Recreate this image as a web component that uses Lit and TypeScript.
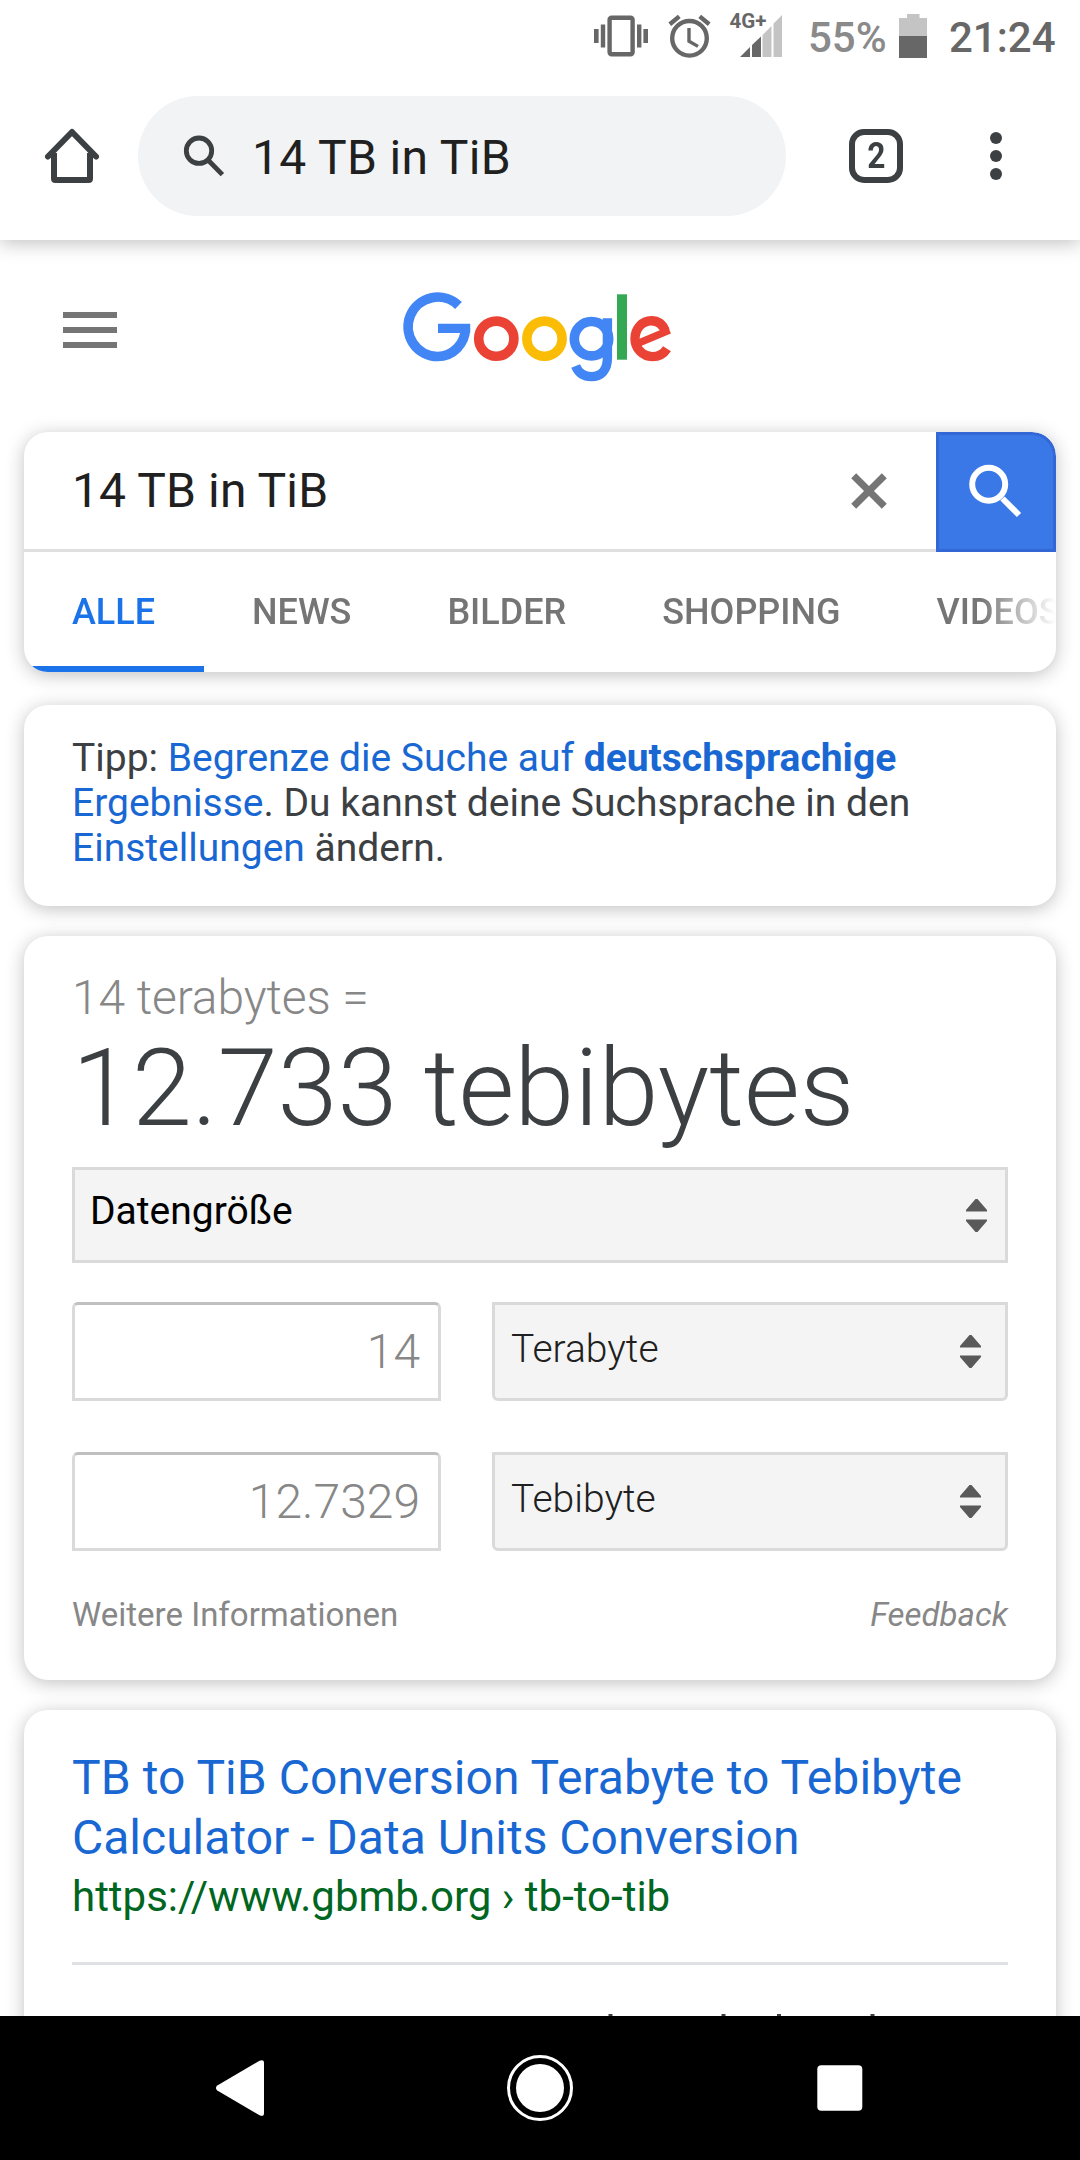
import { LitElement, html, css, svg } from "lit";
import { customElement, property } from "lit/decorators.js";

const FONT = css`Roboto, "Liberation Sans", sans-serif`;

/** Status bar, 72px high. Icon view boxes share the screen's coordinates. */
@customElement("status-bar")
class StatusBar extends LitElement {
  static styles = css`
    :host { display: flex; position: relative; z-index: 3; background: #fff; height: 72px; padding-left: 594px; font: 500 42px/69px ${FONT}; color: #676767; flex: none; white-space: nowrap; }
    svg { display: block; flex: none; }
    .alarm { margin-left: 20px; }
    .signal { margin-left: 16px; }
    .net { font: 700 20px ${FONT}; fill: #676767; }
    .pct { width: 91px; margin-left: 24px; padding-top: 3px; color: #8a8a8a; }
    .time { margin-left: 22px; padding-top: 3px; }
  `;
  render() {
    return html`
      <svg width="54" height="72" viewBox="594 0 54 72" fill="#676767">
        <rect x="609.6" y="17.8" width="23" height="36.4" rx="2" fill="none" stroke="#676767" stroke-width="4.4" />
        <rect x="594" y="29" width="4.6" height="14" /><rect x="600.8" y="24.5" width="4.4" height="23" />
        <rect x="637" y="24.5" width="4.4" height="23" /><rect x="643.4" y="29" width="4.6" height="14" />
      </svg>
      <svg class="alarm" width="44" height="72" viewBox="668 0 44 72" fill="none" stroke="#676767" stroke-width="4.4">
        <circle cx="689.5" cy="38.3" r="17.3" />
        <path d="M689 28v13.2l9 5.2" stroke-width="3.4" />
        <path d="M669.8 24.2L679.3 16.4M699.7 16.4L709.2 24.2" />
      </svg>
      <svg class="signal" width="56" height="72" viewBox="728 0 56 72">
        <text class="net" x="729.5" y="27.8" textLength="37" lengthAdjust="spacingAndGlyphs">4G+</text>
        <path fill="#676767" d="M740 57L750 47V57ZM752 45L761 36.500V57H752Z" />
        <path fill="#c4c4c4" d="M762.500 35L771.500 26V57H762.500ZM773.500 23.500L782 15V57H773.500Z" />
      </svg>
      <span class="pct">55%</span>
      <svg width="28" height="72" viewBox="899 0 28 72">
        <path fill="#c4c4c4" d="M907 14h12.500v4H927v18H899V18h8z" />
        <path fill="#676767" d="M899 36h28v22H899z" />
      </svg>
      <span class="time">21:24</span>`;
  }
}

@customElement("browser-toolbar")
class BrowserToolbar extends LitElement {
  @property() query = "";
  static styles = css`
    :host { display: flex; position: relative; align-items: center; height: 168px; padding-left: 42px; box-sizing: border-box; background: #fff; box-shadow: 0 3px 18px rgba(0,0,0,.25); flex: none; z-index: 2; }
    svg { display: block; flex: none; }
    .pill { display: flex; align-items: center; width: 648px; height: 120px; margin-left: 36px; padding-left: 45px; box-sizing: border-box; border-radius: 60px; background: #f1f3f4; }
    .text { margin-left: 27px; padding-top: 3px; font: 400 48px/60px ${FONT}; letter-spacing: .35px; color: #202020; }
    .tabs { display: flex; align-items: center; justify-content: center; width: 54px; height: 54px; margin-left: 63px; box-sizing: border-box; border: 6px solid #3c4043; border-radius: 15px; font: 700 36px/42px ${FONT}; color: #3c4043; }
    .count { transform: scaleX(.88); }
    .more { margin-left: 84px; }
  `;
  render() {
    return html`
      <svg width="60" height="60" viewBox="42 126 60 60" fill="none" stroke="#3c4043" stroke-width="6">
        <path d="M54 153V178.500Q54 180 55.500 180H88.500Q90 180 90 178.500V153" />
        <path d="M48 156.500L72 132L96 156.500" stroke-linecap="round" stroke-linejoin="round" />
      </svg>
      <div class="pill">
        <svg width="42" height="42" viewBox="183 135 42 42" fill="none" stroke="#3c4043" stroke-width="4.800">
          <circle cx="199" cy="150.700" r="12.700" /><path d="M208 160L222.400 174.600" />
        </svg>
        <span class="text">${this.query}</span>
      </div>
      <div class="tabs"><span class="count">2</span></div>
      <svg class="more" width="18" height="54" viewBox="987 129 18 54" fill="#3c4043">
        <circle cx="996" cy="138" r="6" /><circle cx="996" cy="156" r="6" /><circle cx="996" cy="174" r="6" />
      </svg>`;
  }
}

@customElement("site-header")
class SiteHeader extends LitElement {
  static styles = css`
    :host { display: flex; height: 192px; padding-left: 63px; flex: none; }
    svg { display: block; flex: none; }
    .logo { margin-left: 284px; }
  `;
  render() {
    return html`
      <svg width="54" height="192" viewBox="63 240 54 192" fill="#757575">
        <path d="M63 312h54v6H63zM63 327h54v6H63zM63 342h54v6H63z" />
      </svg>
      <svg class="logo" width="272" height="192" viewBox="401 240 272 192" fill="none" role="img" aria-label="Google">
        <g stroke="#4285f4">
          <path stroke-width="9.700" d="M458.500 305.500A29.700 29.700 0 1 0 437.500 356.500A27.900 28.500 0 0 0 465.400 328.300" />
          <path stroke-width="9.200" d="M438 328.300H470.200" />
          <circle stroke-width="9.600" cx="591.500" cy="338.700" r="17.200" />
          <path stroke-width="9.400" d="M607.400 318.300V358C607.400 370 601 376.600 591.500 376.600C584.500 376.600 578.500 373 575.600 366" />
        </g>
        <circle stroke="#ea4335" stroke-width="9.600" cx="496.300" cy="338.700" r="17.600" />
        <circle stroke="#fbbc05" stroke-width="9.600" cx="544.500" cy="338.700" r="17.600" />
        <rect fill="#34a853" x="617" y="294.300" width="10" height="65.400" />
        <g stroke="#ea4335">
          <path stroke-width="9.400" d="M667 348.700C663.600 354 658.800 356.600 652.300 356.600A17.300 17.900 0 0 1 635 338.700C635 328.500 642.300 320.700 651.300 320.700C657.900 320.700 662.800 324.500 665.200 331" />
          <path stroke-width="7.400" d="M669.500 330.200L638.500 343.200" />
        </g>
      </svg>`;
  }
}

@customElement("search-card")
class SearchCard extends LitElement {
  @property() query = "";
  static styles = css`
    :host { display: block; height: 240px; border-radius: 24px; background: #fff; overflow: hidden; box-shadow: 0 3px 18px rgba(32,33,36,.28); flex: none; }
    .row { display: flex; height: 120px; }
    .field { display: flex; flex: 1; align-items: center; justify-content: space-between; padding: 0 48px; border-bottom: 3px solid #dfdfdf; font: 400 48px/60px ${FONT}; letter-spacing: .12px; color: #202020; }
    .go { display: block; box-sizing: border-box; width: 120px; height: 120px; border: 3px solid #3367d6; border-radius: 0 24px 0 0; background: #3b78e7; }
    svg { display: block; }
    .nav { display: flex; height: 120px; -webkit-mask-image: linear-gradient(to right, #000 956px, transparent 1032px); mask-image: linear-gradient(to right, #000 956px, transparent 1032px); }
    .tab { flex: none; box-sizing: border-box; height: 120px; padding: 0 48px; border: 0 solid transparent; border-width: 6px 0; font: 500 36px/108px ${FONT}; color: #757575; white-space: nowrap; }
    .active { min-width: 180px; color: #1a73e8; border-bottom-color: #1a73e8; }
  `;
  render() {
    const tabs = ["ALLE", "NEWS", "BILDER", "SHOPPING", "VIDEOS"];
    return html`
      <div class="row">
        <div class="field">
          <span>${this.query}</span>
          <svg width="38" height="38" viewBox="850.300 470.300 38 38" stroke="#757575" stroke-width="7"><path d="M854 474L884.600 504.600M884.600 474L854 504.600" /></svg>
        </div>
        <div class="go">
          <svg width="114" height="114" viewBox="939 435 114 114" fill="none" stroke="#fff" stroke-width="6">
            <circle cx="988.700" cy="484.300" r="16.500" /><path d="M1002.500 498.500L1019 515" />
          </svg>
        </div>
      </div>
      <div class="nav">${tabs.map((t, i) => html`<span class="tab ${i ? "" : "active"}">${t}</span>`)}</div>`;
  }
}

@customElement("unit-select")
class UnitSelect extends LitElement {
  @property() label = "";
  static styles = css`
    :host { display: flex; align-items: center; justify-content: space-between; box-sizing: border-box; height: 99px; padding: 0 24px 0 16px; border: 3px solid #dadada; border-radius: 0 0 6px 6px; background: #f4f4f4; font: 300 39px/45px ${FONT}; color: #202020; }
    .label { padding-bottom: var(--label-lift, 4px); }
    svg { display: block; }
  `;
  render() {
    return html`<span class="label">${this.label}</span>
      <svg width="21" height="33" fill="#595959"><path d="M0 12.500V11L9.500 0h2L21 11v1.500zM0 20.500V22L9.500 33h2L21 22v-1.500z" /></svg>`;
  }
}

@customElement("app-root")
class AppRoot extends LitElement {
  static styles = css`
    :host { display: flex; flex-direction: column; width: 1080px; height: 2160px; overflow: hidden; background: #fff; font-family: ${FONT}; }
    .page { display: flex; flex-direction: column; height: 1776px; overflow: hidden; flex: none; }
    search-card, .card { margin: 0 24px; }
    .card { box-sizing: border-box; flex: none; padding: 0 48px; border-radius: 24px; background: #fff; box-shadow: 0 3px 18px rgba(32,33,36,.28); }
    .tip { height: 201px; margin-top: 33px; padding-top: 31px; font-size: 39px; line-height: 45px; color: #3c4043; white-space: nowrap; }
    .link { color: #1967d2; }
    .calc { height: 744px; margin-top: 30px; padding-top: 32px; color: #878787; }
    .from { font-size: 48px; font-weight: 300; line-height: 60px; letter-spacing: -.1px; }
    .to { font-size: 108px; font-weight: 300; line-height: 120px; color: #3c4043; white-space: nowrap; }
    .kind { --label-lift: 8px; height: 96px; margin-top: 19px; padding: 0 18px 0 15px; border-radius: 0; font-weight: 400; color: #000; }
    .pair { display: grid; grid-template-columns: 369px 516px; justify-content: space-between; margin-top: 39px; }
    .second { margin-top: 51px; }
    .input { box-sizing: border-box; height: 99px; padding-right: 18px; border: 3px solid #dadada; border-top-color: #c0c0c0; border-radius: 6px 6px 0 0; font-size: 48px; font-weight: 300; line-height: 93px; text-align: right; }
    .foot { display: flex; justify-content: space-between; margin-top: 43px; font-size: 33px; line-height: 42px; }
    .feedback { font-style: italic; }
    .result { height: 420px; margin-top: 30px; padding-top: 38px; white-space: nowrap; }
    .title { font-size: 48px; line-height: 60px; color: #1967d2; }
    .lead { letter-spacing: .06px; }
    .url { margin-top: 2px; font-size: 42px; line-height: 54px; color: #006621; }
    .rule { height: 3px; margin-top: 38px; background: #dfe1e5; }
    .clipped { display: block; margin-top: 49px; }
    .keys { display: flex; height: 144px; background: #000; flex: none; }
    .keys svg { display: block; }
  `;
  render() {
    const query = "14 TB in TiB";
    return html`
      <status-bar></status-bar>
      <browser-toolbar .query=${query}></browser-toolbar>
      <div class="page">
        <site-header></site-header>
        <search-card .query=${query}></search-card>
        <div class="card tip">
          Tipp: <span class="link">Begrenze die Suche auf <b>deutschsprachige</b></span><br>
          <span class="link">Ergebnisse</span>. Du kannst deine Suchsprache in den<br>
          <span class="link">Einstellungen</span> ändern.
        </div>
        <div class="card calc">
          <div class="from">14 terabytes =</div>
          <div class="to">12.733 tebibytes</div>
          <unit-select class="kind" label="Datengröße"></unit-select>
          <div class="pair"><div class="input">14</div><unit-select label="Terabyte"></unit-select></div>
          <div class="pair second"><div class="input">12.7329</div><unit-select label="Tebibyte"></unit-select></div>
          <div class="foot"><span>Weitere Informationen</span><span class="feedback">Feedback</span></div>
        </div>
        <div class="card result">
          <div class="title"><span class="lead">TB to TiB Conversion Terabyte to Tebibyte</span><br>Calculator - Data Units Conversion</div>
          <div class="url">https://www.gbmb.org › tb-to-tib</div>
          <div class="rule"></div>
          <svg class="clipped" width="936" height="2" fill="#3c4043">
            ${[536.5, 649.5, 705, 798.500].map((x) => svg`<rect x=${x} y="0" width="4" height="2" />`)}
          </svg>
        </div>
      </div>
      <div class="keys">
        <svg width="1080" height="144" viewBox="0 2016 1080 144" fill="#fff">
          <path d="M217.300 2085.500L259.500 2060.800Q264 2058.800 264 2063V2113Q264 2117.200 259.500 2115.200L217.300 2090.500Q214.500 2088 217.300 2085.500Z" />
          <circle cx="540" cy="2088" r="24" /><circle cx="540" cy="2088" r="31.500" fill="none" stroke="#fff" stroke-width="3" />
          <rect x="817.300" y="2065.300" width="45" height="45.400" rx="4" />
        </svg>
      </div>`;
  }
}
